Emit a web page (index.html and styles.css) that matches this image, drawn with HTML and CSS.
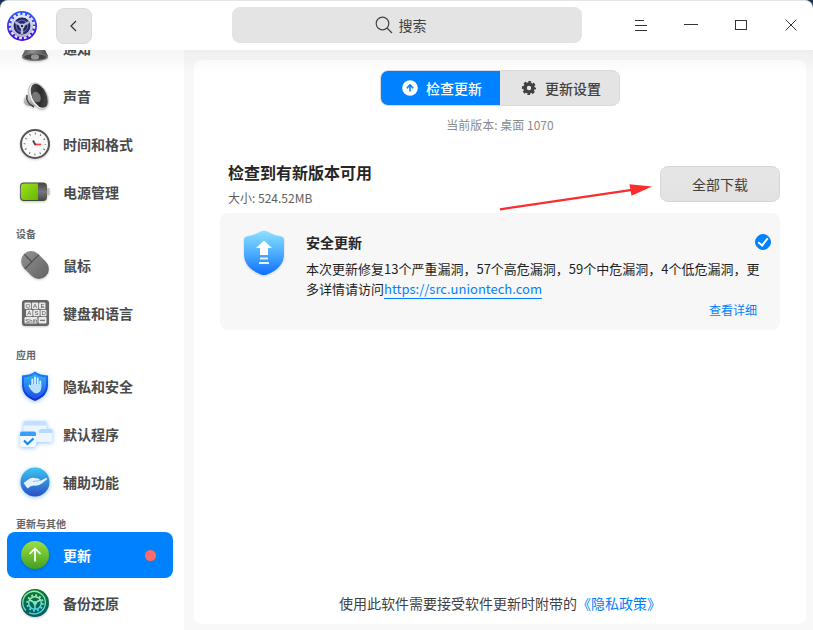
FILE: index.html
```html
<!DOCTYPE html>
<html lang="zh-CN">
<head>
  <meta charset="UTF-8" />
  <meta name="viewport" content="width=device-width, initial-scale=1.0"/>
  <title>控制中心 - 更新</title>
  <link rel="stylesheet" href="styles.css">
</head>
<body>

  <header class="titlebar">
    <div class="titlebar-left">
      <svg class="logo" viewBox="0 0 30 30" aria-hidden="true">
        <defs>
          <linearGradient id="logoBlue" x1="0" y1="0" x2="0" y2="1">
            <stop offset="0" stop-color="#2a5cf5"/>
            <stop offset="1" stop-color="#4a08e0"/>
          </linearGradient>
          <linearGradient id="logoMetal" x1="0" y1="0" x2="0" y2="1">
            <stop offset="0" stop-color="#e4e6f2"/>
            <stop offset="1" stop-color="#b0b4d0"/>
          </linearGradient>
        </defs>
        <circle cx="15" cy="15" r="15" fill="url(#logoBlue)"/>
        <circle cx="15" cy="15" r="12" fill="none" stroke="#e4e6f4" stroke-width="2.600" stroke-dasharray="2.700 2.013"/>
        <circle cx="15" cy="15" r="9.600" fill="none" stroke="url(#logoMetal)" stroke-width="2.800"/>
        <circle cx="15" cy="15" r="8.400" fill="#23265f"/>
        <circle cx="15" cy="15" r="5.800" fill="none" stroke="#5a62b0" stroke-width="1.200"/>
        <path d="M15 15L8 11M15 15L22 11M15 15V23" stroke="#b4b8d2" stroke-width="2.400"/>
        <circle cx="15" cy="15" r="2.600" fill="#c4c8dc"/>
        <circle cx="15" cy="15" r="1.200" fill="#23265f"/>
      </svg>
      <button class="back" type="button" aria-label="返回">
        <svg width="18" height="18" viewBox="0 0 18 18"><path d="M11 4L6 9L11 14" fill="none" stroke="#333" stroke-width="1.200"/></svg>
      </button>
    </div>

    <div class="search-wrap">
      <label class="search">
        <svg width="18" height="18" viewBox="0 0 18 18" aria-hidden="true">
          <circle cx="7.500" cy="7.500" r="6.300" fill="none" stroke="#444" stroke-width="1.200"/>
          <path d="M12 12L17 17" stroke="#444" stroke-width="1.300"/>
        </svg>
        <input type="text" placeholder="搜索" aria-label="搜索">
      </label>
    </div>

    <div class="window-buttons">
      <button type="button" aria-label="菜单">
        <svg width="16" height="16" viewBox="0 0 16 16"><path d="M2 3.500H11M2 8.500H14M2 13.500H14" stroke="#333"/></svg>
      </button>
      <button type="button" aria-label="最小化">
        <svg width="16" height="16" viewBox="0 0 16 16"><path d="M1 7.500H15" stroke="#333"/></svg>
      </button>
      <button type="button" aria-label="最大化">
        <svg width="16" height="16" viewBox="0 0 16 16"><rect x="2.500" y="3.500" width="11" height="9" fill="none" stroke="#333"/></svg>
      </button>
      <button type="button" aria-label="关闭">
        <svg width="16" height="16" viewBox="0 0 16 16"><path d="M2.500 2.500L13.500 13.500M13.500 2.500L2.500 13.500" stroke="#333"/></svg>
      </button>
    </div>
  </header>

  <div class="layout">
    <nav class="sidebar">
      <ul class="menu">
        <li><a href="#notify">
          <svg class="icon" viewBox="0 0 36 36" aria-hidden="true">
            <defs>
              <linearGradient id="bell" x1="0" y1="0" x2="1" y2="0">
                <stop offset="0" stop-color="#555"/><stop offset=".4" stop-color="#999"/><stop offset="1" stop-color="#444"/>
              </linearGradient>
            </defs>
            <path d="M18 5C10 5 9 12 8.500 19L5 26H31L27.500 19C27 12 26 5 18 5Z" fill="url(#bell)"/>
            <ellipse cx="18" cy="27" rx="13" ry="4" fill="#777"/>
            <ellipse cx="18" cy="27" rx="11" ry="2.800" fill="#444"/>
            <ellipse cx="18" cy="27" rx="4" ry="2.800" fill="#999"/>
          </svg>
          <span>通知</span></a></li>
        <li><a href="#sound">
          <svg class="icon" viewBox="0 0 36 36" aria-hidden="true">
            <defs>
              <linearGradient id="cone" x1="0" y1="0" x2="1" y2="1">
                <stop offset="0" stop-color="#555"/><stop offset=".5" stop-color="#2c2c2c"/><stop offset="1" stop-color="#555"/>
              </linearGradient>
              <linearGradient id="silver" x1="0" y1="0" x2="0" y2="1">
                <stop offset="0" stop-color="#eee"/><stop offset="1" stop-color="#999"/>
              </linearGradient>
            </defs>
            <path d="M12 14L8 19C5 24 8 28 14 28L20 28Z" fill="url(#silver)"/>
            <path d="M10 17C9 22 11 26 17 29" fill="none" stroke="#444" stroke-width="1.500"/>
            <ellipse cx="21.500" cy="18" rx="8.600" ry="14" transform="rotate(-26 21.500 18)" fill="#eee" stroke="#aaa" stroke-width=".6"/>
            <ellipse cx="22.300" cy="17.800" rx="7.200" ry="12.800" transform="rotate(-26 22.300 17.800)" fill="url(#cone)"/>
            <ellipse cx="19.500" cy="19" rx="4" ry="5.500" transform="rotate(-26 19.500 19)" fill="#777"/>
          </svg>
          <span>声音</span></a></li>
        <li><a href="#datetime">
          <svg class="icon" viewBox="0 0 36 36" aria-hidden="true">
            <circle cx="18" cy="18" r="14" fill="#fafafa" stroke="#555" stroke-width="2"/>
            <circle cx="18" cy="18" r="10.500" fill="none" stroke="#555" stroke-width="1.800" stroke-dasharray=".9 4.598" stroke-dashoffset=".45"/>
            <path d="M18 18.500H24" stroke="#f44" stroke-width="1.800"/>
            <path d="M18.500 19L16 14.500" stroke="#444" stroke-width="1.800"/>
          </svg>
          <span>时间和格式</span></a></li>
        <li><a href="#power">
          <svg class="icon glow-green" viewBox="0 0 36 36" aria-hidden="true">
            <defs>
              <linearGradient id="charge" x1="0" y1="0" x2="1" y2="1">
                <stop offset="0" stop-color="#a0e01c"/><stop offset="1" stop-color="#62b800"/>
              </linearGradient>
              <linearGradient id="cell" x1="0" y1="0" x2="0" y2="1">
                <stop offset="0" stop-color="#444"/><stop offset=".5" stop-color="#777"/><stop offset="1" stop-color="#444"/>
              </linearGradient>
            </defs>
            <rect x="30" y="14" width="2.500" height="7" rx="1" fill="#bbb"/>
            <rect x="3" y="8.500" width="27" height="18.500" rx="4" fill="url(#cell)"/>
            <path d="M21 9.500H7Q4 9.500 4 12.500V23Q4 26 7 26H21Z" fill="url(#charge)"/>
          </svg>
          <span>电源管理</span></a></li>
      </ul>

      <h2 class="group-title">设备</h2>
      <ul class="menu">
        <li><a href="#mouse">
          <svg class="icon" viewBox="0 0 36 36" aria-hidden="true">
            <defs>
              <linearGradient id="mouseBody" x1="0" y1="0" x2="0" y2="1">
                <stop offset="0" stop-color="#8c8c8c"/><stop offset="1" stop-color="#686868"/>
              </linearGradient>
            </defs>
            <g transform="rotate(-45 18 18)">
              <rect x="8" y="2.500" width="20" height="31" rx="10" fill="url(#mouseBody)"/>
              <path d="M8 13.500H28M18 3V13.500" stroke="#444" stroke-width="1"/>
            </g>
          </svg>
          <span>鼠标</span></a></li>
        <li><a href="#keyboard">
          <svg class="icon" viewBox="0 0 36 36" aria-hidden="true">
            <rect x="5" y="5" width="27" height="26" rx="3" fill="#666"/>
            <g fill="#e8e8e8">
              <rect x="7.500" y="7.500" width="6.500" height="6.500" rx="1"/><rect x="14.800" y="7.500" width="6.500" height="6.500" rx="1"/><rect x="22" y="7.500" width="6.500" height="6.500" rx="1"/>
              <rect x="9" y="14.800" width="6.500" height="6.500" rx="1"/><rect x="16.200" y="14.800" width="6.500" height="6.500" rx="1"/><rect x="23.500" y="14.800" width="6" height="6.500" rx="1"/>
              <rect x="7.500" y="22" width="13" height="6.500" rx="1"/><rect x="21.500" y="22" width="8" height="6.500" rx="1"/>
            </g>
            <g class="keycaps">
              <text x="8.500" y="13">Q</text><text x="16" y="13">A</text><text x="23.500" y="13">E</text>
              <text x="10.300" y="20.300">A</text><text x="17.500" y="20.300">S</text><text x="24.500" y="20.300">D</text>
              <text x="8.300" y="27.500">Shift</text>
            </g>
            <path d="M23 25.300H28" stroke="#555" stroke-width="1"/>
          </svg>
          <span>键盘和语言</span></a></li>
      </ul>

      <h2 class="group-title">应用</h2>
      <ul class="menu">
        <li><a href="#privacy">
          <svg class="icon glow-blue" viewBox="0 0 36 36" aria-hidden="true">
            <defs>
              <linearGradient id="guardEdge" x1="0" y1="0" x2="0" y2="1">
                <stop offset="0" stop-color="#1e86f5"/><stop offset="1" stop-color="#1226d8"/>
              </linearGradient>
              <linearGradient id="guard" x1="0" y1="0" x2="0" y2="1">
                <stop offset="0" stop-color="#35b2f8"/><stop offset="1" stop-color="#1b4fe4"/>
              </linearGradient>
            </defs>
            <path d="M18 3.500C21.500 6.500 26 7 31 7.500V17C31 25 26 30 18 33C10 30 5 25 5 17V7.500C10 7 14.500 6.500 18 3.500Z" fill="url(#guardEdge)"/>
            <path d="M18 6C21.500 8.500 25 9 29 9.500V17C29 24 24.500 28.300 18 31C11.500 28.300 7 24 7 17V9.500C11 9 14.500 8.500 18 6Z" fill="url(#guard)"/>
            <path d="M15.300 18V11.500M18 17V9.500M20.700 18V10.500M23.300 19V13.500M12.500 17.500L14.500 21" stroke="#d5efff" stroke-width="1.900" stroke-linecap="round"/>
            <path d="M14.300 16H24.200V20Q24 24.500 19.500 25.500Q15.500 25 13 20Z" fill="#b9e2ff"/>
          </svg>
          <span>隐私和安全</span></a></li>
        <li><a href="#defapp">
          <svg class="icon glow-blue" viewBox="0 0 36 36" aria-hidden="true">
            <rect x="6.500" y="5" width="23" height="21" rx="2" fill="#eaf5ff"/>
            <path d="M6.500 9.500V7Q6.500 5 8.500 5H27.500Q29.500 5 29.500 7V9.500Z" fill="#c3e0ff"/>
            <rect x="22" y="13" width="13.500" height="13" rx="2" fill="#edf6ff"/>
            <path d="M22 17V15Q22 13 24 13H33.500Q35.500 13 35.500 15V17Z" fill="#b8daff"/>
            <rect x="3" y="15.500" width="16" height="15.500" rx="2" fill="#f2f9ff"/>
            <path d="M3 20V17.500Q3 15.500 5 15.500H17Q19 15.500 19 17.500V20Z" fill="#37a0fb"/>
            <path d="M7 24.500L10.500 28L16.500 22.500" fill="none" stroke="#0f8af0" stroke-width="2.200"/>
          </svg>
          <span>默认程序</span></a></li>
        <li><a href="#assist">
          <svg class="icon glow-blue" viewBox="0 0 36 36" aria-hidden="true">
            <defs>
              <linearGradient id="assist" x1="0" y1="0" x2="0" y2="1">
                <stop offset="0" stop-color="#3cc5f2"/><stop offset="1" stop-color="#2b4fc4"/>
              </linearGradient>
            </defs>
            <circle cx="18" cy="18" r="14.500" fill="url(#assist)"/>
            <path d="M6.500 19L10 16.500Q13 13.500 16 13.800L22 14.800Q23.500 15.500 22 16.600L24 16.400L29 14Q31 14 29.500 15.800L24.500 19.800Q21 22 17 21.600Q13.500 21.600 10.500 24.500Z" fill="#e4f2ff"/>
            <path d="M16 17.500L22 16.700" stroke="#7fb4e8" stroke-width=".8"/>
          </svg>
          <span>辅助功能</span></a></li>
      </ul>

      <h2 class="group-title">更新与其他</h2>
      <ul class="menu">
        <li><a class="active" href="#update" aria-current="page">
          <svg class="icon" viewBox="0 0 36 36" aria-hidden="true">
            <defs>
              <linearGradient id="up" x1="0" y1="0" x2="0" y2="1">
                <stop offset="0" stop-color="#9ddf45"/><stop offset="1" stop-color="#42a01f"/>
              </linearGradient>
            </defs>
            <circle cx="18" cy="18" r="14" fill="url(#up)"/>
            <path d="M18 24.500V12M12.500 17L18 11.500L23.500 17" fill="none" stroke="#fff" stroke-width="1.700"/>
          </svg>
          <span>更新</span>
          <i class="dot"></i></a></li>
        <li><a href="#backup">
          <svg class="icon" viewBox="0 0 36 36" aria-hidden="true">
            <defs>
              <linearGradient id="backup" x1="0" y1="0" x2="0" y2="1">
                <stop offset="0" stop-color="#0b7a30"/><stop offset="1" stop-color="#075a66"/>
              </linearGradient>
              <linearGradient id="backupLine" x1="0" y1="0" x2="0" y2="1">
                <stop offset="0" stop-color="#a8ecb8"/><stop offset="1" stop-color="#45d8ea"/>
              </linearGradient>
            </defs>
            <circle cx="18" cy="18" r="14" fill="url(#backup)"/>
            <g fill="none" stroke="url(#backupLine)">
              <path d="M9 25.500A11.300 11.300 0 1 1 12 27.700" stroke-width="1.300"/>
              <circle cx="18" cy="18" r="7.800" stroke-width="1.900" stroke-dasharray="1.900 2.184"/>
              <circle cx="18" cy="18" r="6.300" stroke-width="1.400"/>
              <path d="M18 18V24M18 18L13 15M18 18L23 15" stroke-width="1.600"/>
            </g>
            <circle cx="18" cy="18" r="2" fill="#7de0d0"/>
          </svg>
          <span>备份还原</span></a></li>
      </ul>
    </nav>

    <main class="content">
      <div class="panel">
        <div class="tabs">
          <button class="tab selected" type="button">
            <svg width="16" height="16" viewBox="0 0 16 16" aria-hidden="true">
              <circle cx="8" cy="8" r="7.800" fill="#fff"/>
              <path d="M8 11.500V5.500M4.800 8.200L8 5L11.200 8.200" fill="none" stroke="#0081ff" stroke-width="1.600"/>
            </svg>
            检查更新
          </button>
          <button class="tab" type="button">
            <svg width="16" height="16" viewBox="0 0 16 16" aria-hidden="true">
              <circle cx="8" cy="8" r="4" fill="none" stroke-width="3.600" class="gear"/>
              <circle cx="8" cy="8" r="6.100" fill="none" stroke-width="2" stroke-dasharray="2.700 2.091" stroke-dashoffset="1.350" class="gear"/>
            </svg>
            更新设置
          </button>
        </div>
        <p class="version">当前版本: 桌面 1070</p>

        <section class="summary">
          <div class="summary-text">
            <h1>检查到有新版本可用</h1>
            <p>大小: 524.52MB</p>
          </div>
          <div class="download">
            <button class="download-btn" type="button">全部下载</button>
            <svg class="arrow" viewBox="0 0 156 28" aria-hidden="true">
              <path d="M2 25.300L134 5.800" stroke="#fb2c2c" stroke-width="2.300"/>
              <path d="M154 2.500L131.500 .2L133.500 11.700Z" fill="#fb2c2c"/>
            </svg>
          </div>
        </section>

        <section class="update-card">
          <svg class="shield" viewBox="0 0 42 46" aria-hidden="true">
            <defs>
              <linearGradient id="shield" x1="0" y1="0" x2="0" y2="1">
                <stop offset="0" stop-color="#8ee0ff"/><stop offset=".5" stop-color="#4daeff"/><stop offset="1" stop-color="#0d6fff"/>
              </linearGradient>
            </defs>
            <path d="M18.500 1.300Q21 0 23.500 1.300Q31 5.500 38.500 6.500Q41 7 41 9.500V24Q41 38 24 44.500Q21 45.700 18 44.500Q1 38 1 24V9.500Q1 7 3.500 6.500Q11 5.500 18.500 1.300Z" fill="url(#shield)"/>
            <path d="M21 10.500L29 18H25V25H17V18H13Z" fill="#fff"/>
            <path d="M17 28.500H25M16 33H26" stroke="#e6f3ff" stroke-width="2"/>
          </svg>
          <div class="update-body">
            <div class="update-head">
              <h3><label for="pickSecurity">安全更新</label></h3>
              <input type="checkbox" id="pickSecurity" class="pick" checked>
            </div>
            <p>本次更新修复13个严重漏洞，57个高危漏洞，59个中危漏洞，4个低危漏洞，更多详情请访问<a href="https://src.uniontech.com">https://src.uniontech.com</a></p>
            <a class="detail" href="#detail">查看详细</a>
          </div>
        </section>

        <p class="agreement">使用此软件需要接受软件更新时附带的<a href="#privacy-policy">《隐私政策》</a></p>
      </div>
    </main>
  </div>

</body>
</html>
```

FILE: styles.css
```css
* {
  margin: 0;
  padding: 0;
  box-sizing: border-box;
}

html {
  background: #1b3350;
}

body {
  font-family: "Noto Sans CJK SC", "Noto Sans", sans-serif;
  font-size: 14px;
  line-height: 20px;
  color: #414141;
  height: 100vh;
  display: flex;
  flex-direction: column;
  overflow: hidden;
  background: #fff;
  border-top: 1px solid #e2e5e9;
  border-radius: 8px 8px 0 0;
}

button,
input {
  font: inherit;
  color: inherit;
}

button {
  cursor: pointer;
}

a {
  color: #0081ff;
  text-decoration: none;
}

ul {
  list-style: none;
}

/* title bar */
.titlebar {
  flex: none;
  height: 49px;
  display: grid;
  grid-template-columns: 1fr minmax(0, 350px) 1fr;
  align-items: center;
}

.titlebar-left {
  display: flex;
  align-items: center;
  gap: 19px;
  padding-left: 7px;
}

.logo {
  width: 30px;
  height: 30px;
}

.back {
  width: 36px;
  height: 36px;
  display: flex;
  align-items: center;
  justify-content: center;
  background: #e5e5e5;
  border: 1px solid #d9d9d9;
  border-radius: 8px;
}

.search-wrap,
.window-buttons {
  padding-bottom: 2px;
}

.search {
  display: flex;
  align-items: center;
  gap: 6px;
  height: 36px;
  padding-left: calc(50% - 32px);
  background: #e4e4e4;
  border-radius: 8px;
}

.search svg {
  flex: none;
}

.search input {
  flex: 1;
  min-width: 0;
  border: none;
  outline: none;
  background: none;
}

.search input::placeholder {
  color: #414141;
  opacity: 1;
}

.window-buttons {
  display: flex;
  justify-content: flex-end;
  gap: 6px;
}

.window-buttons button {
  width: 44px;
  height: 40px;
  display: flex;
  align-items: center;
  justify-content: center;
  border: none;
  background: none;
}

/* body layout */
.layout {
  flex: 1;
  min-height: 0;
  display: flex;
  position: relative;
}

.layout::before {
  content: "";
  position: absolute;
  top: 0;
  left: 0;
  right: 0;
  height: 24px;
  background: linear-gradient(rgba(0, 0, 0, 0.04), rgba(0, 0, 0, 0));
  pointer-events: none;
  z-index: 1;
}

/* sidebar, scrolled down by half a row */
.sidebar {
  flex: none;
  width: 184px;
  padding: 0 11px 0 7px;
  overflow: hidden;
}

.sidebar .menu:first-child {
  margin-top: -25px;
}

.menu {
  display: flex;
  flex-direction: column;
  gap: 2px;
}

.menu a {
  display: flex;
  align-items: center;
  gap: 10px;
  height: 46px;
  padding: 0 17px 0 10px;
  border-radius: 8px;
  color: #4a4a4a;
  font-weight: 600;
}

.menu a.active {
  background: #0081ff;
  color: #fff;
}

.icon {
  flex: none;
  width: 36px;
  height: 36px;
  filter: drop-shadow(0 1px 1px rgba(0, 0, 0, 0.2));
}

.glow-blue {
  filter: drop-shadow(0 1px 2px rgba(40, 140, 255, 0.5));
}

.glow-green {
  filter: drop-shadow(0 1px 1px rgba(110, 190, 0, 0.5));
}

.keycaps {
  font-family: "Liberation Sans", sans-serif;
  font-size: 6px;
  font-weight: 400;
  fill: #555;
}

.dot {
  width: 11px;
  height: 11px;
  margin-left: auto;
  border-radius: 50%;
  background: #ff6a6a;
}

.group-title {
  padding: 11px 9px 0;
  font-size: 10px;
  line-height: 16px;
  font-weight: 600;
  color: #666;
}

/* content */
.content {
  flex: 1;
  min-width: 0;
  display: flex;
  padding: 10px 7px 6px 10px;
  background: #f8f8f8;
}

.panel {
  flex: 1;
  min-width: 0;
  display: flex;
  flex-direction: column;
  padding: 10px 26px 11px;
  background: #fff;
  border-radius: 8px;
}

.tabs {
  align-self: center;
  display: flex;
  border: 1px solid #dadada;
  border-radius: 8px;
  overflow: hidden;
  background: #e4e4e4;
}

.tab {
  width: 119px;
  height: 34px;
  display: flex;
  align-items: center;
  justify-content: center;
  gap: 8px;
  padding-left: 3px;
  border: none;
  background: none;
  font-weight: 500;
}

.tab.selected {
  background: #0081ff;
  color: #fff;
}

.gear {
  stroke: #414141;
}

.version {
  margin-top: 10px;
  text-align: center;
  font-size: 12px;
  line-height: 18px;
  color: #8c8c8c;
}

.summary {
  display: flex;
  justify-content: space-between;
  align-items: center;
  margin-top: 26px;
  padding-left: 8px;
}

.summary h1 {
  font-size: 16px;
  line-height: 24px;
  font-weight: 600;
  color: #262626;
}

.summary p {
  margin-top: 5px;
  font-size: 12px;
  line-height: 18px;
  color: #5f5f5f;
}

.download {
  position: relative;
}

.download-btn {
  width: 120px;
  height: 36px;
  border: 1px solid #d6d6d6;
  border-radius: 8px;
  background: linear-gradient(#e6e6e6, #e2e2e2);
}

.arrow {
  position: absolute;
  right: 126px;
  top: 18px;
  width: 156px;
  height: 28px;
}

.update-card {
  display: flex;
  gap: 21px;
  margin-top: 6px;
  padding: 17px 20px 10px 23px;
  background: #f7f7f7;
  border-radius: 8px;
}

.shield {
  flex: none;
  width: 42px;
  height: 46px;
  filter: drop-shadow(0 1px 1px rgba(0, 60, 160, 0.2));
}

.update-body {
  flex: 1;
  min-width: 0;
  display: flex;
  flex-direction: column;
}

.update-head {
  display: flex;
  justify-content: space-between;
  align-items: center;
  margin-right: -11px;
  height: 24px;
}

.update-head h3 {
  font-size: 14px;
  font-weight: 600;
  color: #262626;
}

.pick {
  appearance: none;
  width: 16px;
  height: 16px;
  border-radius: 50%;
  border: 1px solid #b0b0b0;
  position: relative;
}

.pick:checked {
  background: #0081ff;
  border-color: #0081ff;
}

.pick:checked::after {
  content: "";
  position: absolute;
  box-sizing: border-box;
  left: 4px;
  top: 1px;
  width: 6px;
  height: 10px;
  border: solid #fff;
  border-width: 0 2px 2px 0;
  transform: rotate(38deg);
}

.update-body p {
  margin-top: 5px;
  font-size: 13px;
  color: #1f1f1f;
}

.update-body p a {
  border-bottom: 1px solid #0081ff;
}

.detail {
  align-self: flex-end;
  margin-top: 1px;
  padding-right: 3px;
  font-size: 12px;
}

.agreement {
  margin-top: auto;
  text-align: center;
}
```
